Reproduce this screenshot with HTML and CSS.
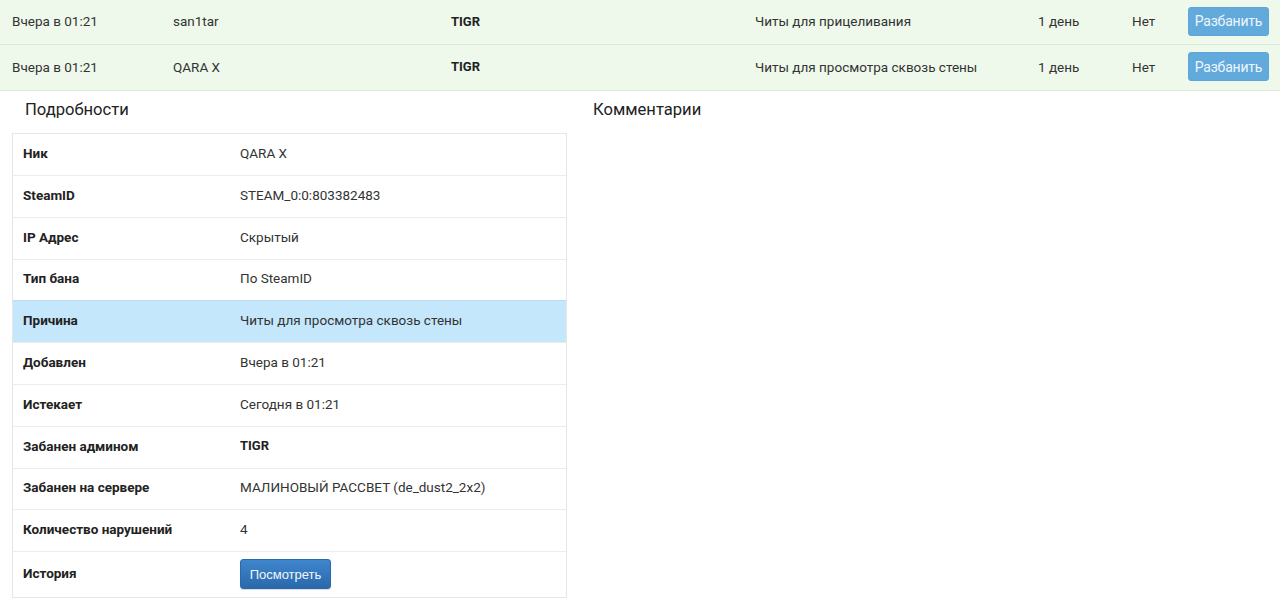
FILE: index.html
```html
<!DOCTYPE html>
<html lang="ru">
<head>
<meta charset="utf-8">
<title>Бан</title>
<link rel="stylesheet" href="styles.css">
</head>
<body>
<div class="bans">
  <div class="ban-row">
    <div class="cell">Вчера в 01:21</div>
    <div class="cell">san1tar</div>
    <div class="cell bold">TIGR</div>
    <div class="cell">Читы для прицеливания</div>
    <div class="cell">1 день</div>
    <div class="cell">Нет</div>
    <div class="cell"><button class="btn-unban">Разбанить</button></div>
  </div>
  <div class="ban-row">
    <div class="cell">Вчера в 01:21</div>
    <div class="cell">QARA X</div>
    <div class="cell bold">TIGR</div>
    <div class="cell">Читы для просмотра сквозь стены</div>
    <div class="cell">1 день</div>
    <div class="cell">Нет</div>
    <div class="cell"><button class="btn-unban">Разбанить</button></div>
  </div>
</div>
<div class="details-wrap">
  <div class="details">
    <h3 class="heading">Подробности</h3>
    <div class="info">
      <div class="info-row"><div class="label">Ник</div><div class="value">QARA X</div></div>
      <div class="info-row"><div class="label">SteamID</div><div class="value">STEAM_0:0:803382483</div></div>
      <div class="info-row"><div class="label">IP Адрес</div><div class="value">Скрытый</div></div>
      <div class="info-row"><div class="label">Тип бана</div><div class="value">По SteamID</div></div>
      <div class="info-row active"><div class="label">Причина</div><div class="value">Читы для просмотра сквозь стены</div></div>
      <div class="info-row"><div class="label">Добавлен</div><div class="value">Вчера в 01:21</div></div>
      <div class="info-row"><div class="label">Истекает</div><div class="value">Сегодня в 01:21</div></div>
      <div class="info-row"><div class="label">Забанен админом</div><div class="value bold">TIGR</div></div>
      <div class="info-row"><div class="label">Забанен на сервере</div><div class="value">МАЛИНОВЫЙ РАССВЕТ (de_dust2_2x2)</div></div>
      <div class="info-row"><div class="label">Количество нарушений</div><div class="value">4</div></div>
      <div class="info-row last"><div class="label">История</div><div class="value"><button class="btn-view">Посмотреть</button></div></div>
    </div>
  </div>
  <div class="comments">
    <h3 class="heading">Комментарии</h3>
  </div>
</div>
</body>
</html>
```
FILE: styles.css
```css
* { box-sizing: border-box; }
body {
  margin: 0;
  background: #fff;
  font-family: Roboto, "Noto Sans", sans-serif;
  font-size: 13.5px;
  color: #333;
}
.bold { font-weight: 700; }
.bans { width: 100%; }
.ban-row {
  display: grid;
  grid-template-columns: 161px 278px 304px 283px 94px 56px 1fr;
  height: 45px;
  align-items: center;
  background: #eef9ec;
  border-bottom: 1px solid #dcebd9;
}
.ban-row:last-child { height: 46px; }
.ban-row .cell { padding-left: 12px; padding-bottom: 2px; white-space: nowrap; }
.ban-row .cell.bold { font-size: 13px; color: #222; }
.ban-row .cell:last-child { padding-bottom: 0; }
.btn-unban {
  width: 81px;
  height: 29px;
  border: 1px solid #5fa7da;
  border-radius: 3px;
  background: #62aadc;
  color: #eef6fc;
  font-family: Roboto, sans-serif;
  font-size: 14px;
  letter-spacing: -0.2px;
  padding: 0;
  margin-top: -2px;
}
.details-wrap {
  display: flex;
  padding: 0 12px;
  gap: 13px;
}
.details { width: 555px; }
.comments { flex: 1; }
.heading {
  margin: 0;
  height: 42px;
  padding: 9px 0 0 13px;
  font-size: 16.6px;
  font-weight: 400;
  color: #222;
}
.info {
  border: 1px solid #e6e6e6;
}
.info-row {
  display: flex;
  height: 41.8px;
  align-items: center;
  padding-bottom: 3px;
  border-top: 1px solid #ececec;
}
.info-row:first-child { border-top: none; height: 41px; }
.info-row.last { height: 46px; padding-bottom: 0; }
.info-row.active { background: #c5e7fb; border-top-color: #b9dcf1; }
.label {
  width: 227px;
  padding-left: 10px;
  font-weight: 700;
  font-size: 13.5px;
  color: #222;
}
.info-row.last .label { padding-bottom: 3px; }
.value { padding-left: 0; color: #333; }
.value.bold { font-size: 13px; color: #222; }
.btn-view {
  width: 91px;
  height: 30px;
  border: 1px solid #2b69ad;
  border-radius: 3px;
  background: linear-gradient(#3f86cc, #2a68ac);
  color: #f2f6fb;
  font-family: "Liberation Sans", Arial, sans-serif;
  font-size: 13px;
  padding: 0;
  margin-top: -1px;
  box-shadow: 0 1px 1px rgba(0,0,0,0.15);
}
```
